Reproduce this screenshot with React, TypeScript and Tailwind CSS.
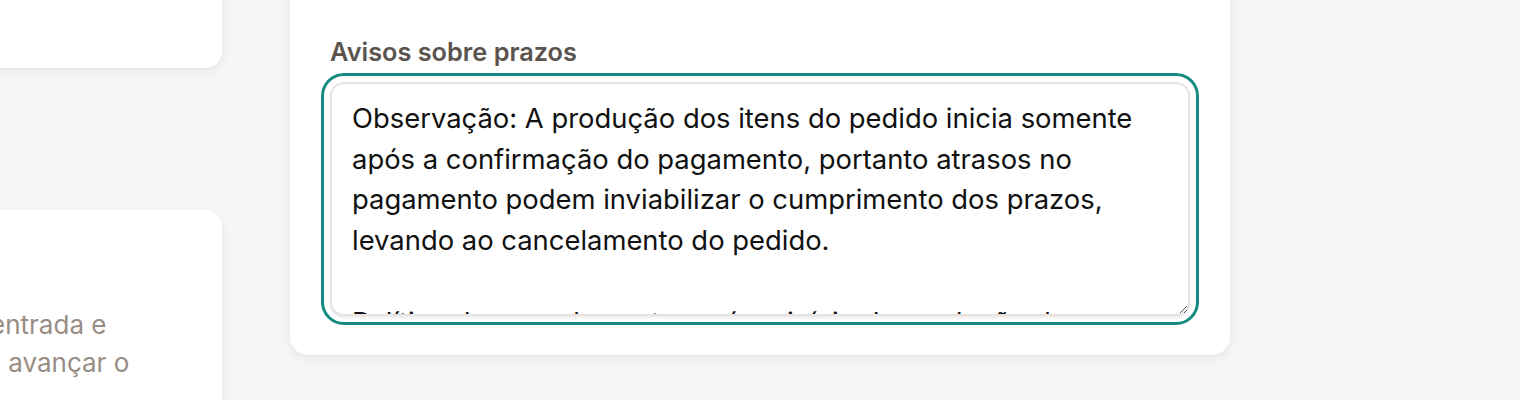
import React from "react";

const notice =
  "Observação: A produção dos itens do pedido inicia somente após a confirmação do pagamento, portanto atrasos no pagamento podem inviabilizar o cumprimento dos prazos, levando ao cancelamento do pedido.\n\nPolítica de cancelamento: após o início da produção do pedido, não será possível cancelar ou alterar os itens solicitados.";

export default function App() {
  return (
    <div
      className="min-h-[400px] w-full overflow-hidden bg-[#f7f6f4]"
      style={{ fontFamily: "Inter, 'Noto Sans', sans-serif" }}
    >
      <div className="flex items-start gap-[68px]">
        {/* left column */}
        <div className="-ml-[80px] -mt-[40px] flex w-[302px] shrink-0 flex-col gap-[142px]">
          <div className="h-[108px] rounded-[16px] bg-white shadow-[0_1px_3px_rgba(60,40,20,0.05),0_4px_14px_rgba(60,40,20,0.05)]" />
          <div className="h-[300px] overflow-hidden rounded-[16px] bg-white pt-[96px] text-[26px] leading-[38px] text-[#978d85] shadow-[0_1px_3px_rgba(60,40,20,0.05),0_4px_14px_rgba(60,40,20,0.05)]">
            <div className="-ml-[120px]">
              <div className="whitespace-nowrap">o valor total de entrada e</div>
              <div className="whitespace-nowrap">pagamento para avançar o</div>
            </div>
          </div>
        </div>

        {/* center card */}
        <div className="-mt-[40px] w-[940px] shrink-0 rounded-[18px] bg-white px-[40px] pb-[39px] pt-[76px] shadow-[0_1px_3px_rgba(60,40,20,0.06),0_4px_14px_rgba(60,40,20,0.05)]">
          <label className="mb-[14px] block text-[25.3px] font-semibold leading-[32px] text-[#5b544e]">
            Avisos sobre prazos
          </label>
          <textarea
            defaultValue={notice}
            className="block h-[234px] w-full resize-y overflow-hidden rounded-[14px] border-2 border-[#e8e3de] bg-white px-[20px] pt-[14px] text-[27.4px] leading-[40.7px] text-[#111111] shadow-[0_2px_3px_rgba(0,0,0,0.08)] outline-[3.5px] outline-offset-[6px] outline-[#148b82] outline-solid"
            style={{ fontFamily: "Inter, 'Noto Sans', sans-serif" }}
          />
        </div>
      </div>
    </div>
  );
}
